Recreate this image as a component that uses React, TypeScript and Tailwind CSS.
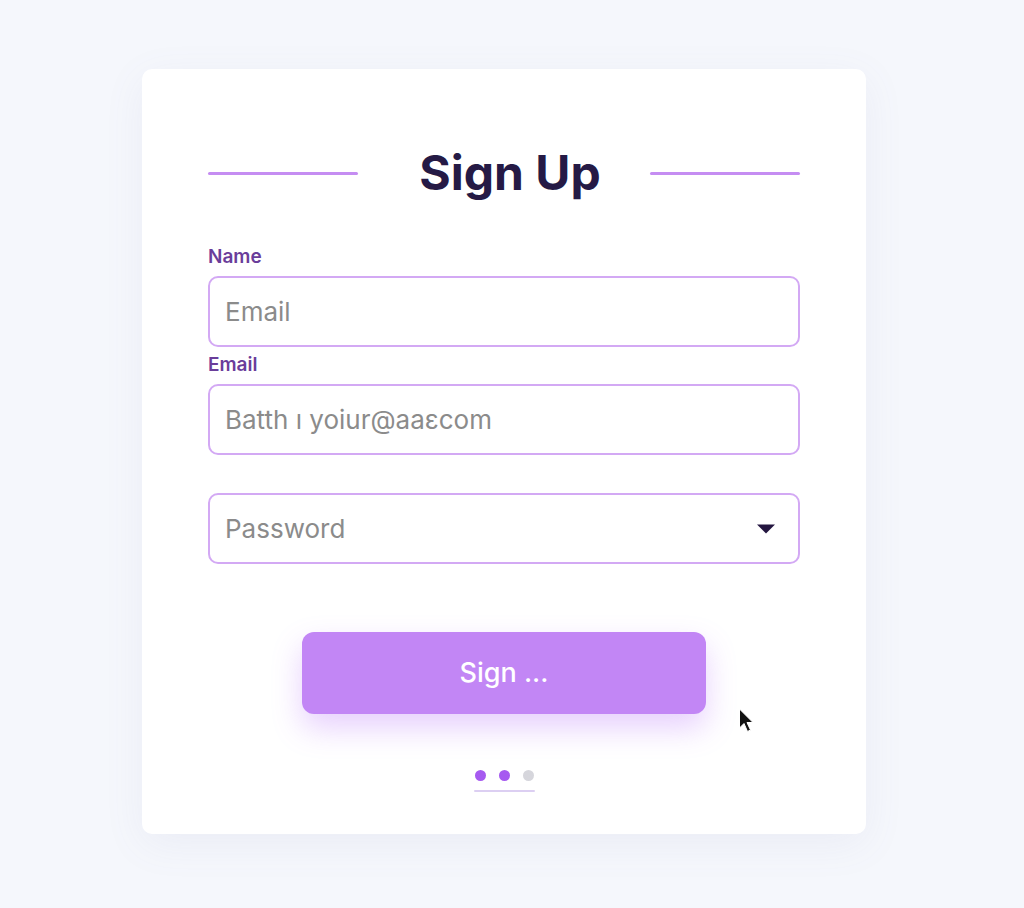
import React from 'react';

const font = { fontFamily: 'Inter, "Noto Sans", sans-serif' };

const Field: React.FC<{ label?: string; placeholder: string; select?: boolean }> = ({ label, placeholder, select }) => (
  <div>
    {label && (
      <div className="h-5 mb-[9px] text-[19px] leading-5 font-semibold text-[#6a3d9a]">{label}</div>
    )}
    <div className="h-[71px] rounded-[10px] border-2 border-[#d3a9f4] bg-white flex items-center pl-[15px] pr-[22px]">
      <span className="flex-1 text-[26px] text-[#8b8b8b]">{placeholder}</span>
      {select && (
        <svg width="20" height="12" viewBox="0 0 20 12">
          <path d="M1 1.5 L19 1.5 L10 10.5 Z" fill="#241640" />
        </svg>
      )}
    </div>
  </div>
);

const App: React.FC = () => {
  return (
    <div className="relative min-h-[908px] w-full bg-[#f5f7fc] pt-[69px]" style={font}>
      <div className="ml-[142px] w-[724px] h-[765px] bg-white rounded-[10px] shadow-[0_10px_40px_rgba(120,120,170,0.08)] px-[66px] pt-[80px]">
        <div className="flex items-center justify-between h-12">
          <div className="w-[150px] h-[3px] rounded-full bg-[#c58df2]" />
          <h1 className="text-[48px] leading-[48px] font-bold text-[#251a45] ml-[12px]">Sign Up</h1>
          <div className="w-[150px] h-[3px] rounded-full bg-[#c58df2]" />
        </div>

        <div className="mt-[50px] flex flex-col gap-[8px]">
          <Field label="Name" placeholder="Email" />
          <Field label="Email" placeholder="Batth ı yoiur@aaεcom" />
        </div>
        <div className="mt-[38px]">
          <Field placeholder="Password" select />
        </div>

        <div className="mt-[68px] flex justify-center">
          <button className="w-[404px] h-[82px] rounded-[12px] bg-[#c286f5] text-white text-[27px] font-medium shadow-[0_14px_30px_rgba(168,85,247,0.28)]">
            Sign ...
          </button>
        </div>

        <div className="mt-[56px] flex flex-col items-center">
          <div className="flex gap-[13px]">
            <span className="w-[11px] h-[11px] rounded-full bg-[#a65af0]" />
            <span className="w-[11px] h-[11px] rounded-full bg-[#a65af0]" />
            <span className="w-[11px] h-[11px] rounded-full bg-[#d6d6dc]" />
          </div>
          <div className="mt-[9px] w-[61px] h-[2px] rounded-full bg-[#dccff2]" />
        </div>
      </div>

      <svg className="absolute left-[738px] top-[708px]" width="18" height="26" viewBox="0 0 18 26">
        <path d="M1.5 1 L1.5 20 L6 15.5 L9.5 23.5 L12.5 22 L9 14.5 L15 14.5 Z" fill="#111" stroke="#fff" strokeWidth="1" />
      </svg>
    </div>
  );
};

export default App;
